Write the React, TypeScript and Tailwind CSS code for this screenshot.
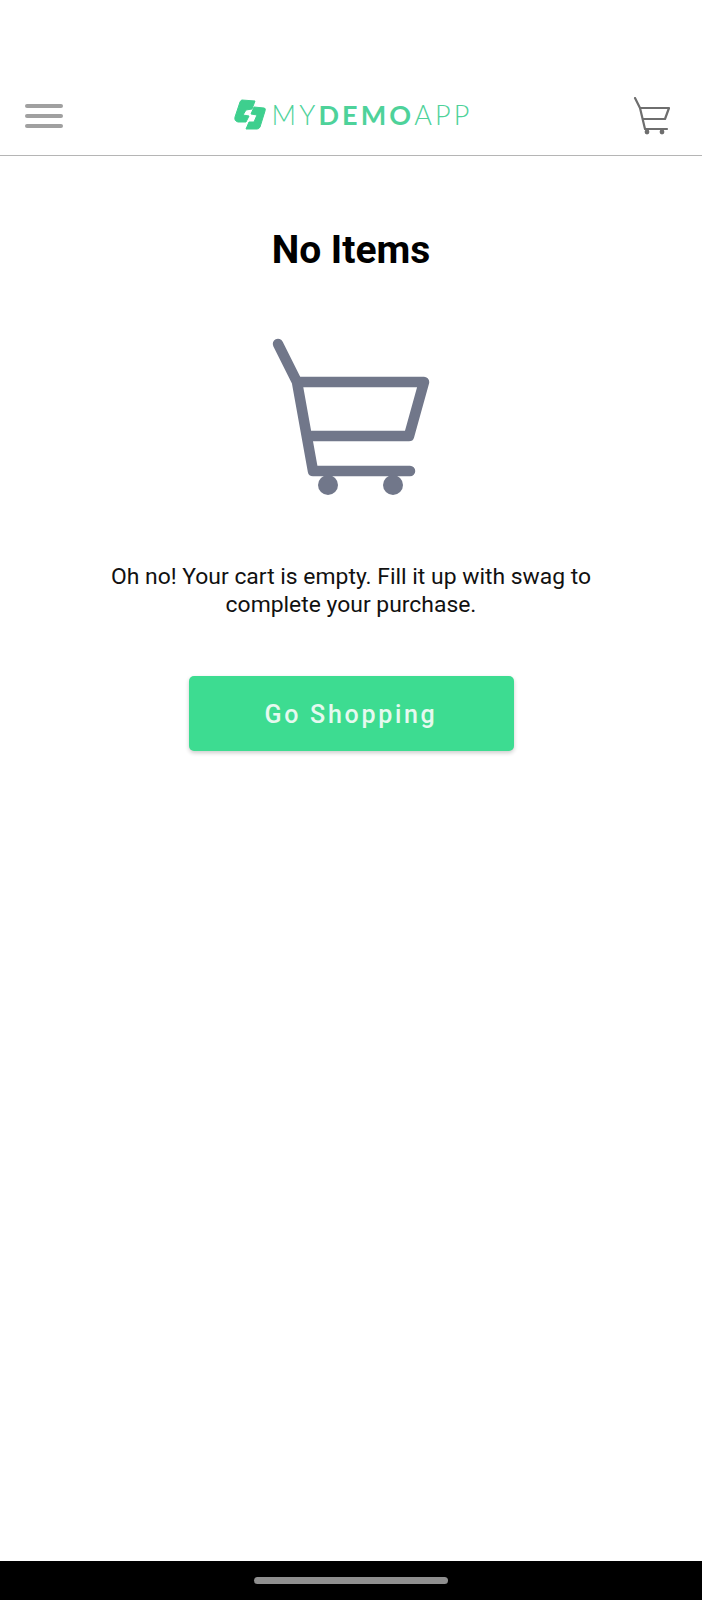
const font = { fontFamily: "Roboto, sans-serif" };

function SmallCart() {
  return (
    <svg width="38" height="38" viewBox="0 0 38 38" fill="none" stroke="#6e6e6e" strokeWidth="2.2" strokeLinecap="round" strokeLinejoin="round">
      <path d="M2 1 L7 11 L12 32 M7 11 H36 L32 22 H10 M12 32 H34" />
      <circle cx="14" cy="35" r="2.4" fill="#6e6e6e" stroke="none" />
      <circle cx="29" cy="35" r="2.4" fill="#6e6e6e" stroke="none" />
    </svg>
  );
}

function BigCart() {
  return (
    <svg width="200" height="190" viewBox="0 0 200 190" fill="none" stroke="#71778a" strokeWidth="10.5" strokeLinecap="round" strokeLinejoin="round">
      <path d="M27 24 L46 62 L62 151 H159 M46 62 H173 L158 116 H57" />
      <circle cx="77" cy="165" r="10" fill="#71778a" stroke="none" />
      <circle cx="142" cy="165" r="10" fill="#71778a" stroke="none" />
    </svg>
  );
}

function LogoMark() {
  return (
    <svg width="32" height="32" viewBox="0 0 32 32" fill="#3ecf8e" stroke="#3ecf8e" strokeWidth="1" strokeLinejoin="round">
      <path d="M8 1 L21 2 L18 10 L12 11 L9 16 L15 17 L12 23 L4 23 Q0 22 1 18 L6 3 Q7 1 8 1 Z" />
      <path d="M20 8 L30 9 Q32 9 31 12 L26 28 Q25 30 23 30 L12 30 L15 23 L20 23 L23 16 L17 15 Z" />
    </svg>
  );
}

export default function App() {
  return (
    <div className="flex h-[1600px] flex-col bg-white" style={font}>
      <header className="flex h-[156px] items-center justify-between border-b border-[#b5b5b5] pl-[25px] pr-[31px] pt-[76px]">
        <div className="flex w-[38px] flex-col gap-[6px]">
          <div className="h-[4px] rounded-sm bg-[#a0a0a0]" />
          <div className="h-[4px] rounded-sm bg-[#a0a0a0]" />
          <div className="h-[4px] rounded-sm bg-[#a0a0a0]" />
        </div>
        <div className="mb-[2px] ml-[10px] flex items-center gap-[6px]">
          <LogoMark />
          <div className="text-[27px] leading-[32px] tracking-[3.1px] text-[#4ed29a]" style={{ fontFamily: "Lato, sans-serif" }}>
            <span className="font-light">MY</span>
            <span className="font-bold">DEMO</span>
            <span className="font-light">APP</span>
          </div>
        </div>
        <SmallCart />
      </header>
      <main className="flex flex-1 flex-col items-center">
        <h1 className="mt-[71px] text-[39px] font-bold leading-[46px] text-black">No Items</h1>
        <div className="mt-[47px]"><BigCart /></div>
        <p className="mt-[53px] w-[520px] text-center text-[22.9px] leading-[27.5px] text-[#111111]">
          Oh no! Your cart is empty. Fill it up with swag to complete your purchase.
        </p>
        <button className="mt-[58px] flex h-[75px] w-[325px] items-center justify-center rounded-[5px] bg-[#3ddc91] pt-[2px] text-[25px] font-medium tracking-[2.7px] text-[#e6f9ef] shadow-[0_2px_4px_rgba(0,0,0,0.2)]">
          Go Shopping
        </button>
      </main>
      <footer className="flex h-[39px] items-start justify-center bg-black pt-[16px]">
        <div className="h-[7px] w-[194px] rounded-full bg-[#8f8f8f]" />
      </footer>
    </div>
  );
}
